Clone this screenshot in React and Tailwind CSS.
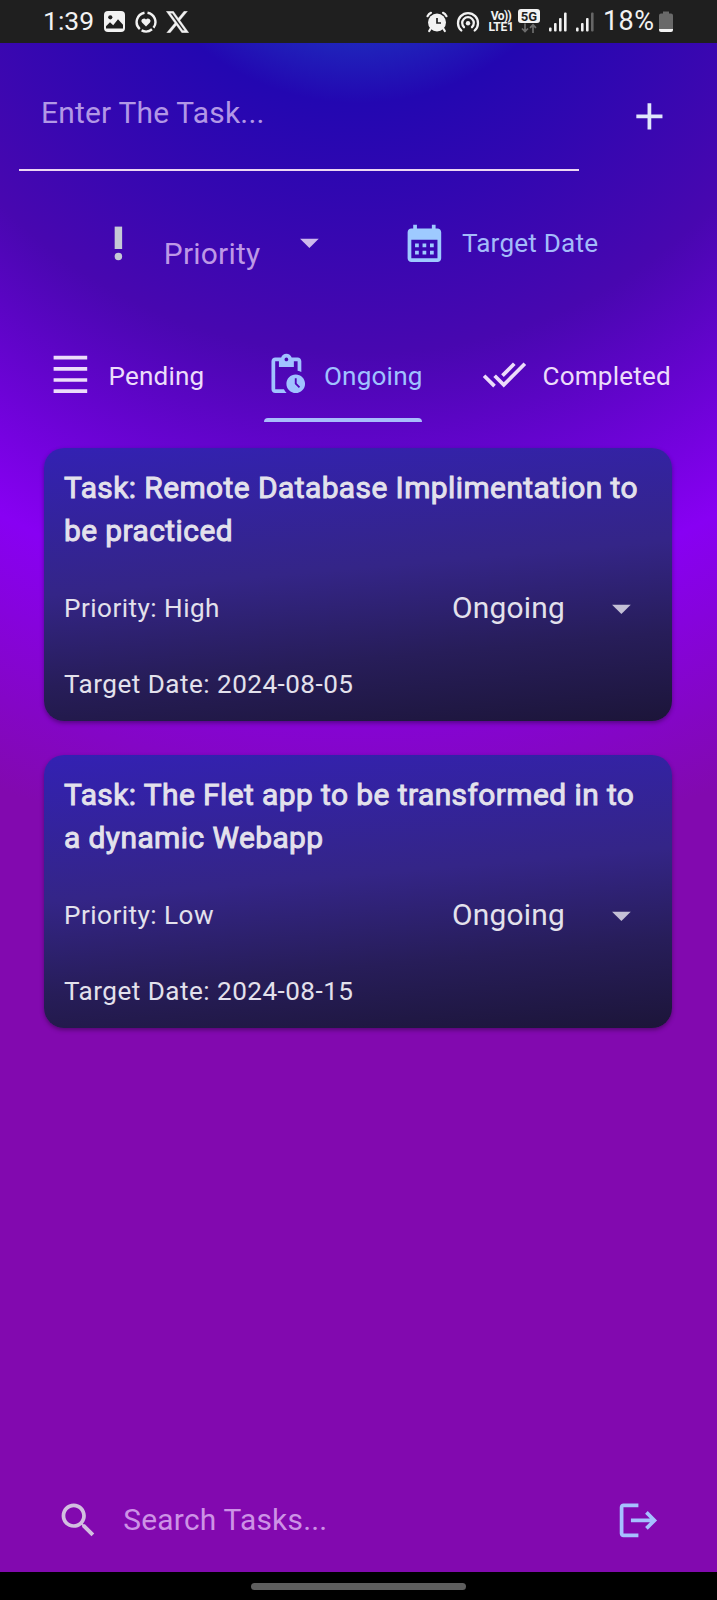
import React from "react";

const PATHS = {
  add: "M19 13h-6v6h-2v-6H5v-2h6V5h2v6h6z",
  drop: "M7 10l5 5 5-5z",
  calendar:
    "M19 4h-1V2h-2v2H8V2H6v2H5c-1.1 0-1.99.9-1.99 2L3 20c0 1.1.89 2 2 2h14c1.1 0 2-.9 2-2V6c0-1.1-.9-2-2-2zm0 16H5V10h14v10zM9 14H7v-2h2v2zm4 0h-2v-2h2v2zm4 0h-2v-2h2v2zm-8 4H7v-2h2v2zm4 0h-2v-2h2v2zm4 0h-2v-2h2v2z",
  lines: "M3 2h18v2H3zM3 20h18v2H3zM3 14h18v2H3zM3 8h18v2H3z",
  pending:
    "M17 12c-2.76 0-5 2.24-5 5s2.24 5 5 5 5-2.24 5-5-2.24-5-5-5zm1.65 7.35L16.5 17.2V14h1v2.79l1.85 1.85-.7.71zM18 3h-3.18C14.4 1.84 13.3 1 12 1s-2.4.84-2.82 2H6c-1.1 0-2 .9-2 2v15c0 1.1.9 2 2 2h6.11c-.59-.57-1.07-1.25-1.42-2H6V5h2v3h8V5h2v5.08c.71.1 1.38.31 2 .6V5c0-1.1-.9-2-2-2zm-6 2c-.55 0-1-.45-1-1s.45-1 1-1 1 .45 1 1-.45 1-1 1z",
  doneAll:
    "M18 7l-1.41-1.41-6.34 6.34 1.41 1.41L18 7zm4.24-1.41L11.66 16.17 7.48 12l-1.41 1.41L11.66 19l12-12-1.42-1.41zM.41 13.41L6 19l1.41-1.41L1.83 12 .41 13.41z",
  search:
    "M15.5 14h-.79l-.28-.27C15.41 12.59 16 11.11 16 9.5 16 5.91 13.09 3 9.5 3S3 5.91 3 9.5 5.91 16 9.5 16c1.61 0 3.09-.59 4.23-1.57l.27.28v.79l5 4.99L20.49 19l-4.99-5zm-6 0C7.01 14 5 11.99 5 9.5S7.01 5 9.5 5 14 7.01 14 9.5 11.99 14 9.5 14z",
  logout:
    "M17 7l-1.41 1.41L18.17 11H8v2h10.17l-2.58 2.58L17 17l5-5zM4 5h8V3H4c-1.1 0-2 .9-2 2v14c0 1.1.9 2 2 2h8v-2H4z",
  x: "M18.244 2.25h3.308l-7.227 8.26 8.502 11.24H16.17l-5.214-6.817L4.99 21.75H1.68l7.73-8.835L1.254 2.25H8.08l4.713 6.231zm-1.161 17.52h1.833L7.084 4.126H5.117z",
};

function Icon({ name, className = "" }) {
  return (
    <svg viewBox="0 0 24 24" fill="currentColor" className={`h-[44.8px] w-[44.8px] shrink-0 ${className}`}>
      <path d={PATHS[name]} />
    </svg>
  );
}

function Signal({ dim }) {
  return (
    <svg viewBox="0 0 18 20" className="h-5 w-[18px] shrink-0" fill="#f2f2f2">
      <rect x="0" y="15.5" width="2.6" height="4" rx="1" />
      <rect x="5" y="11" width="2.6" height="8.5" rx="1" />
      <rect x="10" y="6" width="2.6" height="13.5" rx="1" />
      <rect x="15" y="0.5" width="2.6" height="19" rx="1" fill={dim ? "#666" : "#f2f2f2"} />
    </svg>
  );
}

function StatusBar() {
  return (
    <div className="flex h-[43px] shrink-0 items-center bg-[#1f1f1f] pl-[43px] text-[#f2f2f2]">
      <div className="w-[61px] text-[26.5px] leading-none">1:39</div>
      <svg viewBox="0 0 21 21" className="h-[21px] w-[21px]">
        <rect width="21" height="21" rx="4" fill="#f2f2f2" />
        <circle cx="6.3" cy="6.3" r="2.1" fill="#1f1f1f" />
        <path d="M2 17.5v-2.2l4-4 3.2 3 4.8-6 5 5.5v3.7z" fill="#1f1f1f" />
      </svg>
      <svg viewBox="0 0 22 22" className="ml-[10px] h-[22px] w-[22px]" fill="none" stroke="#f2f2f2" strokeWidth="2.4">
        <path d="M9.500 1.700A9.500 9.500 0 0 0 4.800 18.100M6.600 19.400A9.500 9.500 0 0 0 17 18.300M18.500 16.800A9.500 9.500 0 0 0 12.500 1.700" />
        <path d="M11 15.600l-4-4a2.500 2.500 0 0 1 4-3 2.500 2.500 0 0 1 4 3z" fill="#f2f2f2" stroke="none" />
      </svg>
      <svg viewBox="1 2 22 20" preserveAspectRatio="none" className="ml-[9px] h-[22px] w-[23px]" fill="#f2f2f2" stroke="#f2f2f2" strokeWidth="0.3">
        <path d={PATHS.x} />
      </svg>

      <svg viewBox="0 0 22 22" className="ml-[237px] h-[22px] w-[22px]">
        <g fill="none" stroke="#f2f2f2" strokeWidth="2.2" strokeLinecap="round">
          <path d="M1.5 5.2A8 8 0 0 1 5 1.800M20.500 5.200A8 8 0 0 0 17 1.800M5 17l-1.800 3M17 17l1.800 3" />
        </g>
        <circle cx="11" cy="11.500" r="9" fill="#f2f2f2" />
        <path d="M11 7v5h4" fill="none" stroke="#1f1f1f" strokeWidth="1.7" />
      </svg>
      <svg viewBox="0 0 24 22" className="ml-[8px] h-[22px] w-6" fill="none" stroke="#f2f2f2" strokeWidth="2.3" strokeLinecap="round">
        <path d="M5.300 19.500A10 10 0 1 1 18.700 19.500M8 16.200a5.800 5.800 0 1 1 8 0" />
        <circle cx="12" cy="12.2" r="2.200" fill="#f2f2f2" stroke="none" />
      </svg>
      <div className="ml-[8px] flex w-[26px] flex-col items-center pt-px text-[12px] leading-[11.5px] font-bold whitespace-nowrap">
        <span className="tracking-[-0.6px]">Vo))</span>
        <span className="tracking-[-0.300px]">LTE1</span>
      </div>
      <div className="ml-[4px] flex h-[25px] w-[22px] flex-col items-center">
        <span className="flex h-[14px] w-[22px] items-center justify-center rounded-[3px] bg-[#f2f2f2] text-[13px] leading-none font-bold text-[#1f1f1f]">5G</span>
        <svg viewBox="0 0 16 10" className="h-[10px] w-4" fill="none" stroke="#6d6d6d" strokeWidth="1.7">
          <path d="M4 0.5v8M1 5.5l3 3 3-3M12 10V2M9 4.8l3-3 3 3" />
        </svg>
      </div>
      <div className="ml-[9px] flex items-center gap-[9px]">
        <Signal />
        <Signal dim />
      </div>
      <div className="ml-[9px] w-[55px] text-[27px] leading-none tracking-[0.400px] whitespace-nowrap">18%</div>
      <svg viewBox="0 0 14 22" className="ml-px h-[22px] w-[14px]">
        <path d="M4 0.5h6v2h2a2 2 0 0 1 2 2V18H0V4.500a2 2 0 0 1 2-2h2z" fill="#696969" />
        <path d="M0 18h14v1a2 2 0 0 1-2 2H2a2 2 0 0 1-2-2z" fill="#f2f2f2" />
      </svg>
    </div>
  );
}

function TaskCard({ lines, priority, date }) {
  return (
    <article className="flex h-[273px] flex-col rounded-[20px] bg-[linear-gradient(175deg,#3321b3_0%,#342587_45%,#271d59_73%,#1c1539_100%)] px-5 pt-[18px] text-[#e3e1ec] shadow-[0_2px_4px_rgba(0,0,0,0.35)]">
      <h2 className="h-[86px] text-[29.9px] leading-[43px] font-normal tracking-[0.44px] whitespace-nowrap [-webkit-text-stroke:0.95px_#e3e1ec]">
        {lines[0]}
        <br />
        {lines[1]}
      </h2>
      <div className="mt-[34px] flex h-[45px] items-center">
        <span className="w-[388px] pt-px text-[26.1px] tracking-[0.47px]">Priority: {priority}</span>
        <span className="mb-[2px] w-[147px] text-[29.9px] leading-[45px] tracking-[0.2px]">Ongoing</span>
        <Icon name="drop" className="text-[#c4c0d6]" />
      </div>
      <div className="mt-[35px] text-[26.1px] leading-[36px] tracking-[0.47px]">Target Date: {date}</div>
    </article>
  );
}

export default function App() {
  return (
    <div className="flex h-[1600px] w-[717px] flex-col overflow-hidden bg-black font-[Roboto,sans-serif]">
      <StatusBar />
      <main className="flex h-[1529px] flex-col bg-[radial-gradient(circle_1004px_at_358px_-191px,#1480da_0%,#2307b1_25%,#4807b0_50%,#8800f3_75%,#8209af_100%)]">
        <div className="ml-[19px] flex h-[128px]">
          <div className="flex w-[560px] items-start border-b-2 border-[#ecd6f3] pt-[52px] pl-[22px]">
            <span className="text-[29.9px] leading-[36px] tracking-[0.23px] text-[#b297e6]">Enter The Task...</span>
          </div>
          <Icon name="add" className="mt-[50.600px] ml-[48px] text-[#dfe6fb]" />
        </div>

        <div className="mt-[49px] flex h-[45px] items-center pl-[96px]">
          <svg viewBox="0 0 24 24" className="mt-px h-[44.8px] w-[44.8px] text-[#c5c9d6]" fill="currentColor">
            <circle cx="12" cy="19" r="2" />
            <path d="M10 3h4v12h-4z" />
          </svg>
          <span className="mt-[22px] ml-[23px] w-[123px] text-[29.9px] leading-none tracking-[0.23px] text-[#bd98e6]">Priority</span>
          <Icon name="drop" className="text-[#cdb9ec]" />
          <Icon name="calendar" className="mt-px ml-[70px] text-[#9ecaff]" />
          <span className="mt-[2px] ml-[15.500px] text-[26.1px] leading-none tracking-[0.2px] whitespace-nowrap text-[#a3bbfa]">Target Date</span>
        </div>

        <nav className="mt-[71px] flex h-[86px] text-[26.1px] leading-[45px] tracking-[0.2px] whitespace-nowrap">
          <div className="ml-[48px] flex h-[86px] w-[215.600px] pt-[16px] text-[#ecdcfa]">
            <Icon name="lines" />
            <span className="ml-[15.600px] pt-[1.500px]">Pending</span>
          </div>
          <div className="flex h-[86px] w-[158.600px] flex-col pt-[16px] text-[#a0c2ff]">
            <div className="flex">
              <Icon name="pending" />
              <span className="ml-[15.500px] pt-[1.500px]">Ongoing</span>
            </div>
            <div className="mt-[19.500px] h-1 shrink-0 rounded-t-[4px] bg-[#a8bdfc]" />
          </div>
          <div className="ml-[60px] flex pt-[16px] text-[#ecdcfa]">
            <Icon name="doneAll" />
            <span className="ml-[15.500px] pt-[1.500px]">Completed</span>
          </div>
        </nav>

        <section className="mt-[26px] mr-[45px] ml-[44px] flex flex-col gap-[34px]">
          <TaskCard lines={["Task: Remote Database Implimentation to", "be practiced"]} priority="High" date="2024-08-05" />
          <TaskCard lines={["Task: The Flet app to be transformed in to", "a dynamic Webapp"]} priority="Low" date="2024-08-15" />
        </section>

        <div className="mt-auto mb-[29px] flex h-[45px] items-center pl-[56px]">
          <Icon name="search" className="text-[#d2bfe0]" />
          <span className="mb-[1px] ml-[22.500px] flex-1 text-[29.9px] leading-none tracking-[0.23px] text-[#cd92e6]">Search Tasks...</span>
          <Icon name="logout" className="mr-[56px] text-[#a6c0ff]" />
        </div>
      </main>
      <footer className="flex h-[28px] items-center justify-center bg-black">
        <div className="h-[7px] w-[215px] rounded-full bg-[#5e5e5e]" />
      </footer>
    </div>
  );
}
